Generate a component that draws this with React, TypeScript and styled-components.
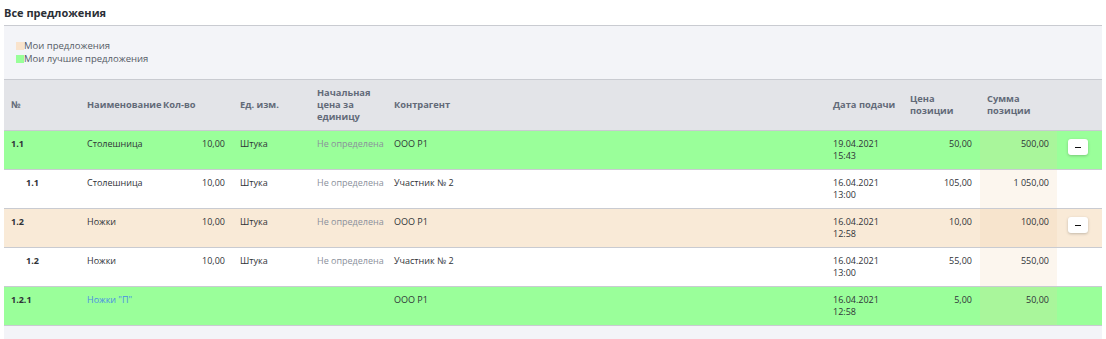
import React from 'react';
import styled, { createGlobalStyle } from 'styled-components';

const GlobalStyle = createGlobalStyle`
  body {
    margin: 0;
    background: #ffffff;
    font-family: 'Open Sans', 'Noto Sans', sans-serif;
    color: #333;
  }
`;

const COLS = '76px 76px 77px 77px 77px 1fr 77px 77px 77px 45px';

const Page = styled.div`
  padding: 0 4px;
  width: 1098px;
`;

const Title = styled.h3`
  margin: 0;
  height: 25px;
  line-height: 26px;
  font-size: 11px;
  font-weight: 700;
  color: #2b2f36;
  border-bottom: 1px solid #c9cbd1;
`;

const Legend = styled.div`
  background: #f3f4f8;
  padding: 13px 12px 14px;
  display: flex;
  flex-direction: column;
  border-bottom: 1px solid #c9cbd1;
`;

const LegendItem = styled.div`
  display: flex;
  align-items: center;
  font-size: 9.5px;
  line-height: 13px;
  color: #555b66;
`;

const Swatch = styled.span<{ $color: string }>`
  width: 8px;
  height: 8px;
  background: ${(p) => p.$color};
`;

const HeadRow = styled.div`
  display: grid;
  grid-template-columns: ${COLS};
  height: 50px;
  align-items: center;
  background: #e3e4e8;
  border-bottom: 1px solid #c9cbd1;
`;

const HeadCell = styled.div`
  padding: 0 7px;
  font-size: 9.3px;
  line-height: 12px;
  font-weight: 700;
  color: #626a78;
  white-space: nowrap;
`;

const Row = styled.div<{ $bg: string }>`
  display: grid;
  grid-template-columns: ${COLS};
  height: 38px;
  background: ${(p) => p.$bg};
  border-bottom: 1px solid #c9cbd1;
`;

const Cell = styled.div<{ $right?: boolean; $bold?: boolean; $indent?: boolean; $tone?: string }>`
  padding: 7px 8px 0 ${(p) => (p.$indent ? '22px' : '7px')};
  font-size: 9px;
  line-height: 12px;
  text-align: ${(p) => (p.$right ? 'right' : 'left')};
  font-weight: ${(p) => (p.$bold ? 700 : 400)};
  color: ${(p) => p.$tone || '#2f3338'};
  white-space: nowrap;
`;

const SumCell = styled(Cell)`
  background: rgba(240, 205, 160, 0.18);
`;

const BtnCell = styled.div`
  display: flex;
  justify-content: center;
  padding: 8px 3px 0 0;
`;

const CollapseBtn = styled.button`
  width: 20px;
  height: 16px;
  border: 0;
  padding: 0;
  border-radius: 3px;
  background: #fff;
  box-shadow: 0 1px 3px rgba(0, 0, 0, 0.22);
  display: flex;
  align-items: center;
  justify-content: center;
  cursor: pointer;
  &::before {
    content: '';
    width: 6px;
    height: 1px;
    background: #111;
  }
`;

const Footer = styled.div`
  height: 13px;
  background: #f3f4f8;
`;

const GREEN = '#9aff9a';
const BEIGE = '#f9ead7';

type R = {
  no: string;
  sub?: boolean;
  name: string;
  link?: boolean;
  qty: string;
  unit: string;
  start: string;
  party: string;
  date: string;
  time: string;
  price: string;
  sum: string;
  bg: string;
  btn?: boolean;
};

const rows: R[] = [
  { no: '1.1', name: 'Столешница', qty: '10,00', unit: 'Штука', start: 'Не определена', party: 'ООО Р1', date: '19.04.2021', time: '15:43', price: '50,00', sum: '500,00', bg: GREEN, btn: true },
  { no: '1.1', sub: true, name: 'Столешница', qty: '10,00', unit: 'Штука', start: 'Не определена', party: 'Участник № 2', date: '16.04.2021', time: '13:00', price: '105,00', sum: '1 050,00', bg: '#ffffff' },
  { no: '1.2', name: 'Ножки', qty: '10,00', unit: 'Штука', start: 'Не определена', party: 'ООО Р1', date: '16.04.2021', time: '12:58', price: '10,00', sum: '100,00', bg: BEIGE, btn: true },
  { no: '1.2', sub: true, name: 'Ножки', qty: '10,00', unit: 'Штука', start: 'Не определена', party: 'Участник № 2', date: '16.04.2021', time: '13:00', price: '55,00', sum: '550,00', bg: '#ffffff' },
  { no: '1.2.1', name: 'Ножки "П"', link: true, qty: '', unit: '', start: '', party: 'ООО Р1', date: '16.04.2021', time: '12:58', price: '5,00', sum: '50,00', bg: GREEN },
];

const App = () => {
  return (
    <Page>
      <GlobalStyle />
      <Title>Все предложения</Title>
      <Legend>
        <LegendItem>
          <Swatch $color="#f9e3cc" />
          Мои предложения
        </LegendItem>
        <LegendItem>
          <Swatch $color="#99ff99" />
          Мои лучшие предложения
        </LegendItem>
      </Legend>
      <HeadRow>
        <HeadCell>№</HeadCell>
        <HeadCell>Наименование</HeadCell>
        <HeadCell>Кол-во</HeadCell>
        <HeadCell>Ед. изм.</HeadCell>
        <HeadCell>
          Начальная
          <br />
          цена за
          <br />
          единицу
        </HeadCell>
        <HeadCell>Контрагент</HeadCell>
        <HeadCell>Дата подачи</HeadCell>
        <HeadCell>
          Цена
          <br />
          позиции
        </HeadCell>
        <HeadCell>
          Сумма
          <br />
          позиции
        </HeadCell>
        <HeadCell />
      </HeadRow>
      {rows.map((r, i) => (
        <Row key={i} $bg={r.bg}>
          <Cell $bold $indent={r.sub}>{r.no}</Cell>
          <Cell $tone={r.link ? '#4a90e2' : undefined}>{r.name}</Cell>
          <Cell $right>{r.qty}</Cell>
          <Cell>{r.unit}</Cell>
          <Cell $tone="#8a909b">{r.start}</Cell>
          <Cell>{r.party}</Cell>
          <Cell>
            {r.date}
            <br />
            {r.time}
          </Cell>
          <Cell $right>{r.price}</Cell>
          <SumCell $right>{r.sum}</SumCell>
          <BtnCell>{r.btn && <CollapseBtn aria-label="collapse" />}</BtnCell>
        </Row>
      ))}
      <Footer />
    </Page>
  );
};

export default App;
